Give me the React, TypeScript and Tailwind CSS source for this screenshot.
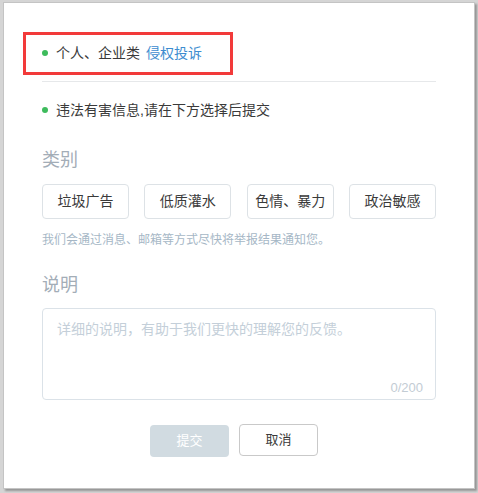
import { useState } from "react"

const categories = ["垃圾广告", "低质灌水", "色情、暴力", "政治敏感"]

const Dot = () => <span className="inline-block w-[6px] h-[6px] rounded-full bg-[#3dbb5c] mr-[8px]" />

export default function App() {
    const [text, setText] = useState("")

    return (
        <div
            className="w-[478px] h-[493px] bg-[#d5d5d5] pl-[3px] pt-[2px]"
            style={{ fontFamily: '"Liberation Sans", "Noto Sans CJK SC", sans-serif' }}
        >
            <div className="relative w-[472px] h-[487px] bg-white border border-[#c4c4c4] shadow-[2px_2px_2px_rgba(0,0,0,0.3)] px-[38px] pt-[40px]">
                {/* annotation box */}
                <div className="absolute left-[19px] top-[29px] w-[210px] h-[43px] border-[3px] border-[#f23a3a]" />

                <div className="flex items-center h-5 text-[14px] text-[#3a3a3a]">
                    <Dot />
                    <span>个人、企业类</span>
                    <span className="ml-[6px] text-[#3d8ccf]">侵权投诉</span>
                </div>

                <div className="mt-[18px] h-px bg-[#e6e8ea]" />

                <div className="mt-[18px] flex items-center h-5 text-[14px] text-[#3a3a3a]">
                    <Dot />
                    <span>违法有害信息,请在下方选择后提交</span>
                </div>

                <div className="mt-[28px] h-6 leading-6 text-[18px] text-[#a3adb7]">类别</div>

                <div className="mt-3 flex justify-between">
                    {categories.map((c) => (
                        <button
                            key={c}
                            className="w-[87px] h-[35px] rounded-[4px] border border-[#dde2e6] bg-white text-[14px] text-[#3a3a3a]"
                        >
                            {c}
                        </button>
                    ))}
                </div>

                <div className="mt-[13px] h-4 leading-4 text-[12px] text-[#a6b7c6]">
                    我们会通过消息、邮箱等方式尽快将举报结果通知您。
                </div>

                <div className="mt-[25px] h-6 leading-6 text-[18px] text-[#a3adb7]">说明</div>

                <div className="relative mt-[11px]">
                    <textarea
                        value={text}
                        onChange={(e) => setText(e.target.value.slice(0, 200))}
                        placeholder="详细的说明，有助于我们更快的理解您的反馈。"
                        className="block w-full h-[92px] resize-none rounded-[4px] border border-[#dbe2e8] px-[14px] pt-[10px] text-[14px] leading-5 text-[#333] placeholder:text-[#c4cfd9] outline-none"
                    />
                    <span className="absolute right-[13px] bottom-[4px] text-[13px] leading-4 text-[#c3ccd4]">
                        {text.length}/200
                    </span>
                </div>

                <div className="mt-[25px] flex gap-[10px] pl-[108px]">
                    <button className="w-[79px] h-[32px] rounded-[4px] bg-[#d1dbe1] text-[13px] text-white">提交</button>
                    <button className="w-[79px] h-[32px] -mt-px rounded-[4px] border border-[#c9c9c9] bg-white text-[13px] text-[#3a3a3a]">
                        取消
                    </button>
                </div>
            </div>
        </div>
    )
}
